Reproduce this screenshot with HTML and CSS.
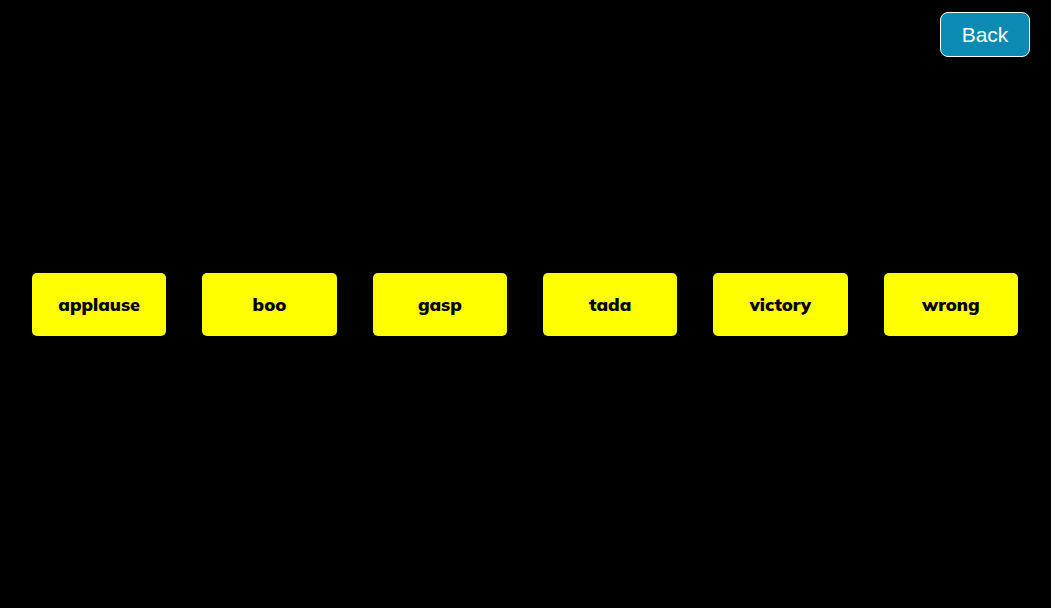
FILE: index.html
```html
<!DOCTYPE html>
<html lang="en">
<head>
<meta charset="utf-8">
<title>Sound Board</title>
<link rel="stylesheet" href="styles.css">
</head>
<body>
<header class="top-bar"><button class="back" type="button">Back</button></header>
<main class="board">
<button class="sound" type="button">applause</button>
<button class="sound" type="button">boo</button>
<button class="sound" type="button">gasp</button>
<button class="sound" type="button">tada</button>
<button class="sound" type="button">victory</button>
<button class="sound" type="button">wrong</button>
</main>
</body>
</html>
```
FILE: styles.css
```css
* {
  box-sizing: border-box;
}

body {
  margin: 0;
  min-height: 100vh;
  display: grid;
  grid-template-rows: 1fr auto 1fr;
  background: #000;
}

.top-bar {
  display: flex;
  justify-content: flex-end;
  align-items: flex-start;
  padding: 12px 21px;
}

.back {
  min-width: 90px;
  padding: 10px 20px;
  border: 1px solid #fff;
  border-radius: 8px;
  background: #0b8ab3;
  color: #fff;
  font: 21px/23px "Liberation Sans", Arial, sans-serif;
  cursor: pointer;
}

.board {
  display: grid;
  grid-template-columns: repeat(6, 1fr);
  gap: 36px;
  padding: 0 33px 0 32px;
}

.sound {
  padding: 20px 0;
  border: 0;
  border-radius: 5px;
  background: #ff0;
  color: #000;
  font: 900 18px/23px Muli, Mulish, "Open Sans", sans-serif;
  cursor: pointer;
}
```
